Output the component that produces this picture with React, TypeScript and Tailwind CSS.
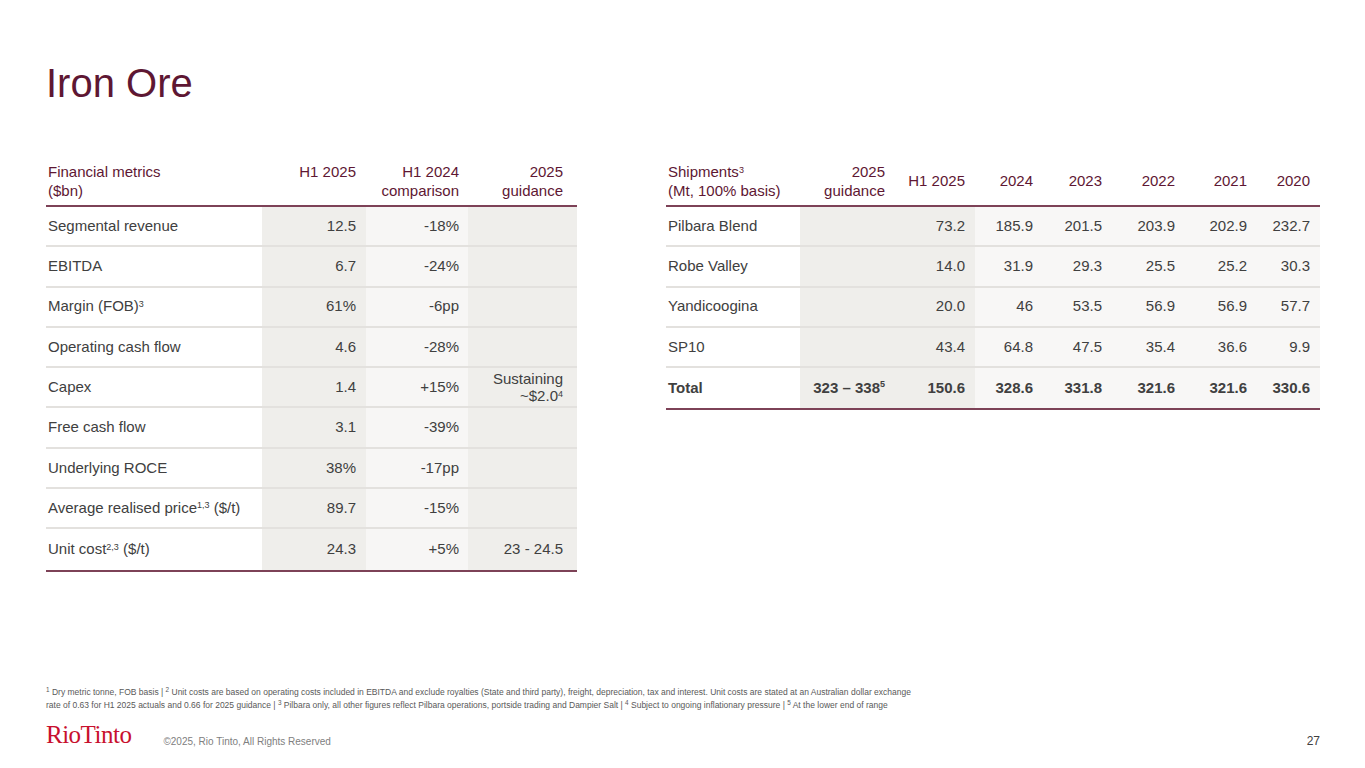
import type { ReactNode } from "react";

const maroon = "text-[#5e1733]";

type FinRow = { label: ReactNode; h1: string; cmp: string; guide?: ReactNode };

const finRows: FinRow[] = [
	{ label: "Segmental revenue", h1: "12.5", cmp: "-18%" },
	{ label: "EBITDA", h1: "6.7", cmp: "-24%" },
	{ label: <>Margin (FOB)<sup className="text-[9px]">3</sup></>, h1: "61%", cmp: "-6pp" },
	{ label: "Operating cash flow", h1: "4.6", cmp: "-28%" },
	{
		label: "Capex",
		h1: "1.4",
		cmp: "+15%",
		guide: (
			<span className="leading-[17px]">
				Sustaining
				<br />~$2.0<sup className="text-[9px]">4</sup>
			</span>
		),
	},
	{ label: "Free cash flow", h1: "3.1", cmp: "-39%" },
	{ label: "Underlying ROCE", h1: "38%", cmp: "-17pp" },
	{ label: <>Average realised price<sup className="text-[9px]">1,3</sup> ($/t)</>, h1: "89.7", cmp: "-15%" },
	{ label: <>Unit cost<sup className="text-[9px]">2,3</sup> ($/t)</>, h1: "24.3", cmp: "+5%", guide: "23 - 24.5" },
];

type ShipRow = { label: string; guide?: ReactNode; vals: string[]; bold?: boolean };

const shipRows: ShipRow[] = [
	{ label: "Pilbara Blend", vals: ["73.2", "185.9", "201.5", "203.9", "202.9", "232.7"] },
	{ label: "Robe Valley", vals: ["14.0", "31.9", "29.3", "25.5", "25.2", "30.3"] },
	{ label: "Yandicoogina", vals: ["20.0", "46", "53.5", "56.9", "56.9", "57.7"] },
	{ label: "SP10", vals: ["43.4", "64.8", "47.5", "35.4", "36.6", "9.9"] },
	{
		label: "Total",
		guide: <>323 – 338<sup className="text-[9px]">5</sup></>,
		vals: ["150.6", "328.6", "331.8", "321.6", "321.6", "330.6"],
		bold: true,
	},
];

function FinancialTable() {
	return (
		<div className="w-[531px] text-[15px]">
			<div className={`grid h-[45px] grid-cols-[216px_104px_102px_109px] border-b-2 border-[#7d4257] leading-[19px] ${maroon}`}>
				<div className="pl-[2px]">
					Financial metrics
					<br />
					($bn)
				</div>
				<div className="pr-[10px] text-right">H1 2025</div>
				<div className="pr-[9px] text-right">
					H1 2024
					<br />
					comparison
				</div>
				<div className="pr-[14px] text-right">
					2025
					<br />
					guidance
				</div>
			</div>
			<div className="border-b-2 border-[#7d4257]">
				{finRows.map((r, i) => (
					<div
						key={i}
						className={`grid h-[40.3px] grid-cols-[216px_104px_102px_109px] text-[#404040] ${i < finRows.length - 1 ? "border-b-2 border-[#e3e1de]" : ""}`}
					>
						<div className="flex items-center pl-[2px]">
							<span>{r.label}</span>
						</div>
						<div className="flex items-center justify-end bg-[#efeeeb] pr-[10px]">{r.h1}</div>
						<div className="flex items-center justify-end bg-[#f7f6f5] pr-[9px]">{r.cmp}</div>
						<div className="flex items-center justify-end bg-[#efeeeb] pr-[14px] text-right">{r.guide}</div>
					</div>
				))}
			</div>
		</div>
	);
}

function ShipmentsTable() {
	const cols = "grid-cols-[134px_95px_80px_68px_69px_73px_72px_63px]";
	const years = ["H1 2025", "2024", "2023", "2022", "2021", "2020"];
	return (
		<div className="w-[654px] text-[15px]">
			<div className={`grid h-[45px] ${cols} border-b-2 border-[#7d4257] leading-[19px] ${maroon}`}>
				<div className="pl-[2px]">
					Shipments<sup className="text-[9px]">3</sup>
					<br />
					(Mt, 100% basis)
				</div>
				<div className="pr-[10px] text-right">
					2025
					<br />
					guidance
				</div>
				{years.map((y) => (
					<div key={y} className="flex items-center justify-end pb-[6px] pr-[10px]">
						{y}
					</div>
				))}
			</div>
			<div className="border-b-2 border-[#7d4257]">
				{shipRows.map((r, i) => (
					<div
						key={r.label}
						className={`grid h-[40.3px] ${cols} text-[#404040] ${r.bold ? "font-bold" : ""} ${i < shipRows.length - 1 ? "border-b-2 border-[#e3e1de]" : ""}`}
					>
						<div className="flex items-center pl-[2px]">{r.label}</div>
						<div className="flex items-center justify-end bg-[#efeeeb] pr-[10px]">{r.guide}</div>
						{r.vals.map((v, j) => (
							<div
								key={j}
								className={`flex items-center justify-end pr-[10px] ${j === 0 ? "bg-[#efeeeb]" : "bg-[#f8f7f6]"}`}
							>
								{v}
							</div>
						))}
					</div>
				))}
			</div>
		</div>
	);
}

export default function App() {
	return (
		<div className="relative flex h-[768px] w-[1365px] flex-col bg-white px-[46px] font-['Liberation_Sans',Arial,sans-serif]">
			<h1 className={`mt-[63px] text-[40px] leading-none ${maroon}`}>Iron Ore</h1>

			<div className="mt-[59px] flex gap-[89px]">
				<FinancialTable />
				<ShipmentsTable />
			</div>

			<div className="mt-auto pb-[56px] text-[8.5px] leading-[13px] text-[#595959]">
				<p>
					<sup>1</sup> Dry metric tonne, FOB basis | <sup>2</sup> Unit costs are based on operating costs included in EBITDA and
					exclude royalties (State and third party), freight, depreciation, tax and interest. Unit costs are stated at an
					Australian dollar exchange
				</p>
				<p>
					rate of 0.63 for H1 2025 actuals and 0.66 for 2025 guidance | <sup>3</sup> Pilbara only, all other figures reflect
					Pilbara operations, portside trading and Dampier Salt | <sup>4</sup> Subject to ongoing inflationary pressure |{" "}
					<sup>5</sup> At the lower end of range
				</p>
			</div>

			<div className="absolute left-[46px] top-[722px] flex w-[1274px] items-end">
				<span className="font-['Liberation_Serif',serif] text-[25px] leading-none tracking-[-0.5px] text-[#c8102e]">
					RioTinto
				</span>
				<span className="ml-[32px] text-[10px] leading-none text-[#808080]">©2025, Rio Tinto, All Rights Reserved</span>
				<span className="ml-auto text-[12px] leading-none text-[#404040]">27</span>
			</div>
		</div>
	);
}
